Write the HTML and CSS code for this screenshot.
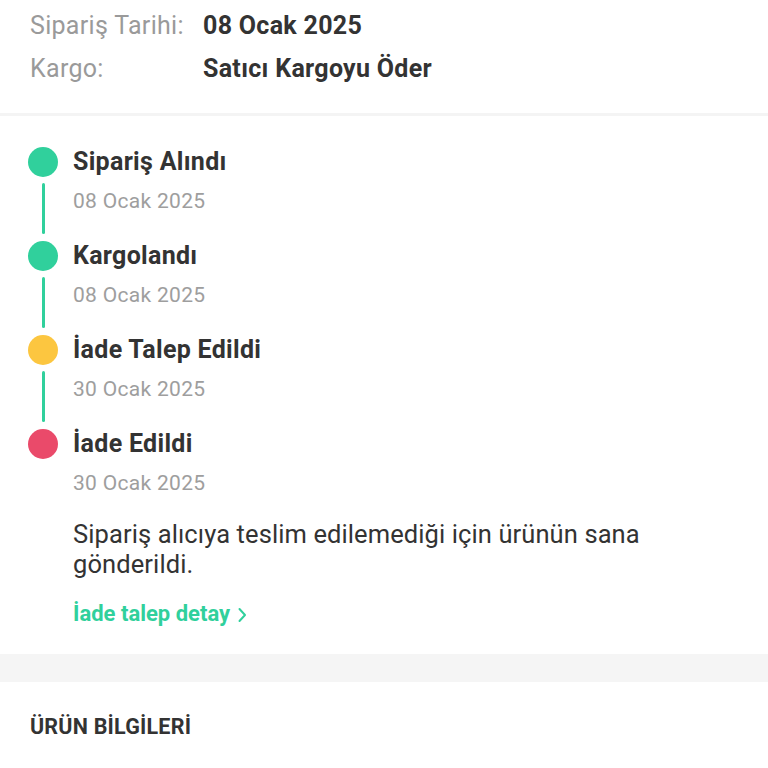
FILE: index.html
```html
<!DOCTYPE html>
<html lang="tr">
<head>
<meta charset="utf-8">
<link rel="stylesheet" href="styles.css">
</head>
<body>
<section class="info">
  <div class="info-row"><span class="info-label">Sipariş Tarihi:</span><span class="info-value">08 Ocak 2025</span></div>
  <div class="info-row"><span class="info-label">Kargo:</span><span class="info-value">Satıcı Kargoyu Öder</span></div>
</section>
<section class="timeline">
  <div class="step">
    <div class="marker"><span class="dot dot-green"></span><span class="line"></span></div>
    <div class="content"><div class="title">Sipariş Alındı</div><div class="date">08 Ocak 2025</div></div>
  </div>
  <div class="step">
    <div class="marker"><span class="dot dot-green"></span><span class="line"></span></div>
    <div class="content"><div class="title">Kargolandı</div><div class="date">08 Ocak 2025</div></div>
  </div>
  <div class="step">
    <div class="marker"><span class="dot dot-yellow"></span><span class="line"></span></div>
    <div class="content"><div class="title">İade Talep Edildi</div><div class="date">30 Ocak 2025</div></div>
  </div>
  <div class="step step-last">
    <div class="marker"><span class="dot dot-red"></span></div>
    <div class="content">
      <div class="title">İade Edildi</div>
      <div class="date">30 Ocak 2025</div>
      <p class="desc">Sipariş alıcıya teslim edilemediği için ürünün sana gönderildi.</p>
      <a class="link" href="#">İade talep detay <svg class="chev" width="10" height="16" viewBox="0 0 10 16"><path d="M2.5 2 L8 8 L2.5 14" fill="none" stroke="currentColor" stroke-width="2" stroke-linecap="round" stroke-linejoin="round"/></svg></a>
    </div>
  </div>
</section>
<div class="band"></div>
<section class="product">
  <h2 class="product-title">ÜRÜN BİLGİLERİ</h2>
</section>
</body>
</html>
```
FILE: styles.css
```css
* { box-sizing: border-box; }
body {
  margin: 0;
  background: #fff;
  font-family: Roboto, "Noto Sans", sans-serif;
  color: #333;
}
.info {
  padding: 9px 30px 27px;
  display: flex;
  flex-direction: column;
  gap: 9px;
  border-bottom: 3px solid #f4f4f4;
}
.info-row {
  display: flex;
  line-height: 34px;
  font-size: 25px;
  letter-spacing: 0.3px;
}
.info-label {
  width: 173px;
  color: #9a9a9a;
}
.info-value {
  font-weight: 700;
  color: #333;
}
.timeline {
  padding: 31px 30px 25px 28px;
}
.step {
  display: flex;
  gap: 15px;
}
.marker {
  width: 30px;
  display: flex;
  flex-direction: column;
  align-items: center;
  flex-shrink: 0;
}
.dot {
  width: 30px;
  height: 30px;
  border-radius: 50%;
}
.dot-green { background: #30d09c; }
.dot-yellow { background: #fcc640; }
.dot-red { background: #ea4a6a; }
.line {
  width: 3px;
  flex: 1;
  margin: 6px 0 7px;
  background: #30d09c;
  border-radius: 2px;
}
.content { flex: 1; padding-bottom: 25px; }
.step-last .content { padding-bottom: 0; }
.title {
  font-size: 25px;
  letter-spacing: 0.3px;
  font-weight: 700;
  line-height: 30px;
  color: #333;
}
.date {
  font-size: 21px;
  letter-spacing: 0.3px;
  line-height: 30px;
  margin-top: 9px;
  color: #9e9e9e;
}
.desc {
  margin: 21px 0 0;
  font-size: 25.5px;
  letter-spacing: 0.1px;
  line-height: 30px;
  color: #333;
}
.link {
  display: inline-flex;
  align-items: center;
  gap: 7px;
  margin-top: 20px;
  font-size: 22px;
  line-height: 30px;
  font-weight: 700;
  color: #30d09c;
  text-decoration: none;
}
.chev { margin-top: 1px; }
.band {
  height: 28px;
  background: #f5f5f5;
}
.product {
  padding: 31px 30px;
}
.product-title {
  margin: 0;
  font-size: 21.5px;
  letter-spacing: 0.2px;
  line-height: 28px;
  font-weight: 700;
  color: #333;
}
```
